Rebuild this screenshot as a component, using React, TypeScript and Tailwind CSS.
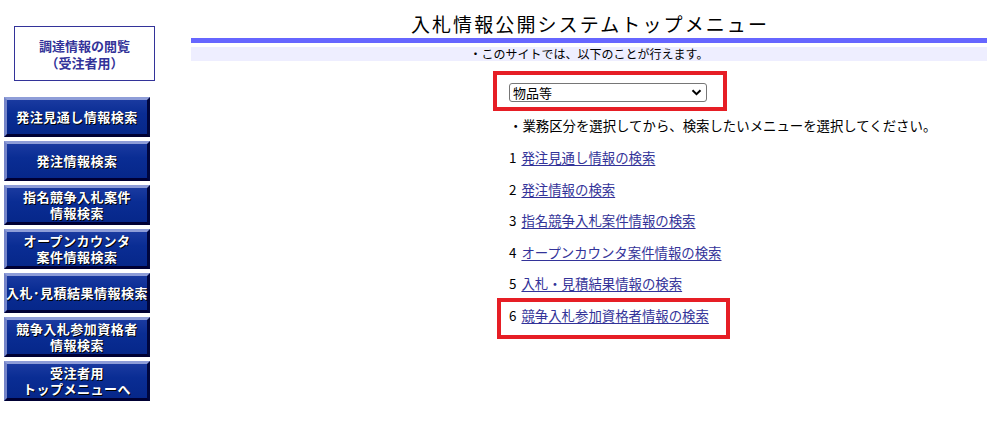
import React from "react";

const navItems: string[][] = [
  ["発注見通し情報検索"],
  ["発注情報検索"],
  ["指名競争入札案件", "情報検索"],
  ["オープンカウンタ", "案件情報検索"],
  ["入札･見積結果情報検索"],
  ["競争入札参加資格者", "情報検索"],
  ["受注者用", "トップメニューへ"],
];

const links = [
  "発注見通し情報の検索",
  "発注情報の検索",
  "指名競争入札案件情報の検索",
  "オープンカウンタ案件情報の検索",
  "入札・見積結果情報の検索",
  "競争入札参加資格者情報の検索",
];

export default function App() {
  return (
    <div
      className="relative w-[1007px] h-[426px] bg-white flex overflow-hidden"
      style={{ fontFamily: '"Noto Sans CJK JP", "Noto Sans", sans-serif' }}
    >
      {/* Left navigation */}
      <div className="w-[191px] shrink-0 flex flex-col pt-[26px]">
        <div className="ml-[14px] w-[141px] h-[55px] border border-[#333399] flex flex-col items-center justify-center text-[13px] leading-[17px] font-bold text-[#333399]">
          <span>調達情報の閲覧</span>
          <span>（受注者用）</span>
        </div>
        <div className="ml-[4px] mt-[16px] flex flex-col gap-[4px]">
          {navItems.map((lines, i) => (
            <div
              key={i}
              className="w-[146px] h-[40px] border-t-[3px] border-l-[3px] border-b-[3px] border-r-[3px] border-t-[#8e9dd8] border-l-[#7484c8] border-b-[#000033] border-r-[#00063d] bg-[linear-gradient(180deg,#1a3aa0_0%,#0a2d94_40%,#06278a_100%)] flex flex-col items-center justify-center text-white font-bold text-[13px] leading-[16px] tracking-[0.5px] [text-shadow:1px_1px_0_#000]"
            >
              {lines.map((l, j) => (
                <span key={j} className="whitespace-nowrap">
                  {l}
                </span>
              ))}
            </div>
          ))}
        </div>
      </div>

      {/* Main area */}
      <div className="w-[796px] shrink-0 flex flex-col pt-[12px]">
        <h1 className="text-center text-[19px] leading-[24px] tracking-[2.1px] text-black font-normal pl-[2px]">
          入札情報公開システムトップメニュー
        </h1>
        <div className="mt-[2px] h-[5px] bg-[#6666ff]" />
        <div className="mt-[4px] h-[14px] bg-[#eeeeff] text-center text-[12px] leading-[14px] text-black">
          ・このサイトでは、以下のことが行えます。
        </div>

        <div className="pl-[318px] flex flex-col">
          <div className="mt-[22px] w-[198px] h-[19px] border border-[#767676] rounded-[3px] bg-white flex items-center justify-between pl-[3px] pr-[4px] text-[13px] leading-[17px] text-black">
            <span>物品等</span>
            <svg width="11" height="7" viewBox="0 0 11 7">
              <path d="M1.5 1.2 L5.5 5.2 L9.5 1.2" fill="none" stroke="#000" strokeWidth="2" />
            </svg>
          </div>
          <div className="mt-[15px] text-[13.4px] leading-[16px] text-black whitespace-nowrap">
            ・業務区分を選択してから、検索したいメニューを選択してください。
          </div>
          <div className="mt-[16px] flex flex-col gap-[15.6px]">
            {links.map((t, i) => (
              <div key={i} className="text-[13.4px] leading-[16px] whitespace-nowrap text-black flex">
                <span className="mr-[5px]">{i + 1}</span>
                <a className="text-[#333399] underline underline-offset-[2px] cursor-pointer">{t}</a>
              </div>
            ))}
          </div>
        </div>
      </div>

      {/* Annotation boxes */}
      <div className="absolute left-[493px] top-[71px] w-[234px] h-[40px] border-[4px] border-[#e61e25] pointer-events-none" />
      <div className="absolute left-[497px] top-[298px] w-[233px] h-[41px] border-[4px] border-[#e61e25] pointer-events-none" />
    </div>
  );
}
